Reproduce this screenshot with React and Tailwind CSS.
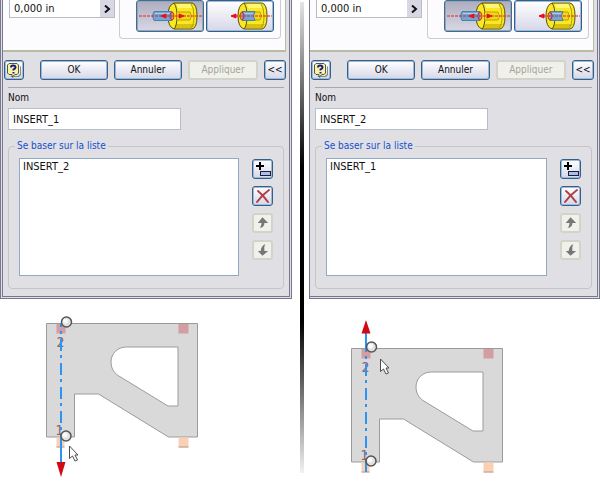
import clsx from "clsx"

const BUTTON = "rounded-[3px] border border-[#2f6090] bg-linear-to-b from-white to-[#d6d7e8] shadow-[inset_0_0_0_1px_#a3b9d0]"
const PRESSED = "rounded-[3px] border border-[#49698f] bg-linear-to-b from-[#adadbe] to-[#d8d8e5] shadow-[inset_0_0_0_1px_#8fa6bf]"
const DISABLED = "rounded-[3px] border-2 border-[#d3d3ca] bg-[#f1f1ec] text-[#a5a595]"

function Barrel() {
  return (
    <>
      <path d="M38 3H56Q61 4 61 16Q61 28 56 29H38Q32 27 32 16Q32 5 38 3Z" fill="#fbe91f" stroke="#57500a" />
      <path d="M41 4H55L57 8H42Z" fill="#fff676" />
      <path d="M40 24H59L56 28H39Z" fill="#dcc010" />
      <path d="M38 3Q41 7 41 16Q41 26 38 29" fill="none" stroke="#57500a" />
      <path d="M55 4Q58 8 58 16Q58 25 55 28" fill="none" stroke="#b39c10" />
      <path d="M41 12H54Q57 16 54 20H41" fill="#f0d818" stroke="#b8a010" />
    </>
  )
}

function OpposedIcon() {
  return (
    <svg viewBox="0 0 68 32" className="h-8 w-full">
      <Barrel />
      <path d="M18 11.500H36V20.500H18Q15 16 18 11.500Z" fill="#6ea6d8" stroke="#4a7fae" />
      <path d="M19 13.500H35" stroke="#a7cdec" />
      <ellipse cx="36" cy="16" rx="2" ry="4" fill="none" stroke="#e3202b" />
      <path d="M3 16H67" stroke="#e8232b" strokeDasharray="3 1" />
      <path d="M25 16L30 14V18ZM48 16L43 14V18Z" fill="#e81019" stroke="#e81019" />
    </svg>
  )
}

function AlignedIcon() {
  return (
    <svg viewBox="0 0 68 32" className="h-8 w-full">
      <Barrel />
      <path d="M36 11.500H49Q46 16 49 20.500H36Z" fill="#6ea6d8" stroke="#4a7fae" />
      <path d="M37 13.500H47" stroke="#a7cdec" />
      <ellipse cx="36" cy="16" rx="2" ry="4" fill="none" stroke="#e3202b" />
      <path d="M25 16H66" stroke="#e8232b" strokeDasharray="3 1" />
      <path d="M25 16L30 14V18Z" fill="#e81019" stroke="#e81019" />
    </svg>
  )
}

function HelpIcon() {
  return (
    <svg viewBox="0 0 16 16" className="size-4">
      <path d="M4 14H12L14 12V4L15 5V13L13 15H8L6 16V15Z" fill="#8c8c7c" />
      <path d="M3 1.500H11L12.500 3V11L11 12.500H9L6 15V12.500H3L1.500 11V3Z" fill="#f8f5a0" stroke="#55554a" />
      <path d="M5 5.500Q5 3.500 7 3.500Q9.500 3.500 9.500 5.500Q9.500 6.500 7.500 7.500V8.500M7.500 10V11.500" fill="none" stroke="#1c1c86" strokeWidth="2" />
    </svg>
  )
}

function AddIcon() {
  return (
    <svg viewBox="0 0 18 18" className="size-[18px]">
      <path d="M2 6H10M6 2V10" stroke="#000" strokeWidth="2" />
      <rect x="6.500" y="11.500" width="10" height="4" fill="#a9bff0" stroke="#1d1d33" />
    </svg>
  )
}

function DeleteIcon() {
  return (
    <svg viewBox="0 0 18 18" className="size-[18px]">
      <path d="M4 4Q9 8 14 15M15 3Q8 8 3 15" fill="none" stroke="#b13e42" strokeWidth="2" strokeLinecap="round" />
    </svg>
  )
}

function UpIcon() {
  return (
    <svg viewBox="0 0 18 18" className="size-[18px]">
      <path d="M9 3L15 9H11Q11 14 6 14Q8 12 8 9H4Z" fill="#777" />
    </svg>
  )
}

function DownIcon() {
  return (
    <svg viewBox="0 0 18 18" className="size-[18px]">
      <path d="M9 15L15 10H11Q10 6 12 3Q8 4 7 10H4Z" fill="#777" />
    </svg>
  )
}

function ConstraintPanel({ id, name, basedOn, edge }) {
  const tools = [
    { label: "Ajouter", icon: <AddIcon /> },
    { label: "Supprimer", icon: <DeleteIcon /> },
    { label: "Monter", icon: <UpIcon />, disabled: true },
    { label: "Descendre", icon: <DownIcon />, disabled: true },
  ]

  return (
    <form className={clsx("border-r-3 border-b-3 border-double border-[#77778f] bg-[#e0dfe4] pr-[3px] pb-[7px]", edge)}>
      {/* Offset and mating options */}
      <div className="flex h-[52px] items-start justify-between border-r border-b-2 border-solid border-[#b9bba9] bg-[#fcfcfe] pr-1 pl-1.5">
        <div className="flex h-[18px] w-[106px] border border-t-0 border-[#b9bcc0] bg-white">
          <input aria-label="Décalage" defaultValue="0,000 in" className="w-0 flex-1 px-1 text-[11px] outline-none" />
          <button type="button" aria-label="Plus" className="flex w-3.5 items-center justify-center bg-[#d8d8e4]">
            <svg viewBox="0 0 8 8" className="size-2">
              <path d="M2 0.500L6 4L2 7.500" fill="none" stroke="#111" strokeWidth="2" />
            </svg>
          </button>
        </div>
        <div className="flex h-[39px] gap-0.5 rounded-b border border-t-0 border-[#cfcbd0] pr-1.5 pl-4">
          <button type="button" aria-label="Opposé" className={clsx("h-8 w-[68px]", PRESSED)}>
            <span className="-m-px block"><OpposedIcon /></span>
          </button>
          <button type="button" aria-label="Aligné" className={clsx("h-8 w-[68px]", BUTTON)}>
            <span className="-m-px block"><AlignedIcon /></span>
          </button>
        </div>
      </div>

      <div className="mt-2 flex h-5 gap-1.5 pl-px">
        <button type="button" aria-label="Aide" className={clsx("mr-2.5 flex w-5 items-center justify-center", BUTTON)}>
          <HelpIcon />
        </button>
        <button type="button" className={clsx("flex-1", BUTTON)}>OK</button>
        <button type="button" className={clsx("flex-1", BUTTON)}>Annuler</button>
        <button type="button" disabled className={clsx("flex-1", DISABLED)}>Appliquer</button>
        <button type="button" className={clsx("w-[22px]", BUTTON)}>&lt;&lt;</button>
      </div>

      <div className="mt-[7px] mr-0.5 ml-[5px] border-t border-solid border-[#a9a8ad] pt-0.5">
        <label htmlFor={id} className="mb-0.5 block h-4">Nom</label>
        <input id={id} defaultValue={name} className="block h-[22px] w-[173px] border border-[#b4bfc9] bg-white px-1 text-[11px] outline-none" />

        <fieldset className="mt-2 flex h-[151px] gap-[13px] rounded border border-[#c6c4ca] px-2.5 pb-3">
          <legend className="-ml-1 px-0.5 text-[#1450d0]">Se baser sur la liste</legend>
          <ul className="mt-1 flex-1 border border-[#8faac6] bg-white px-[3px] text-[11px]">
            <li>{basedOn}</li>
          </ul>
          <div className="flex w-[21px] flex-col gap-[7px] pt-[5px]">
            {tools.map((tool) => (
              <button
                key={tool.label}
                type="button"
                aria-label={tool.label}
                disabled={tool.disabled}
                className={clsx("flex h-5 items-center justify-center", tool.disabled ? DISABLED : BUTTON)}
              >
                {tool.icon}
              </button>
            ))}
          </div>
        </fieldset>
      </div>
    </form>
  )
}

function Handle({ x, y }) {
  return (
    <>
      <circle cx={x} cy={y} r="5" fill="#e2e2e2" stroke="#555" strokeWidth="1.5" />
      <circle cx={x - 1} cy={y - 1} r="2.500" fill="#fafafa" />
    </>
  )
}

// Bracket with its two inserts, origin at the top left corner of the plate
function Bracket({ x, y, direction }) {
  const down = direction === "down"

  return (
    <svg viewBox="0 0 292 200" className="w-full">
      <g transform={`translate(${x} ${y})`}>
        <path
          d="M0 0H151V113.500H122L52 70.500H28V113.500H0ZM80 23.500H131.500V82.500H121.500L71.500 52C67 49 64.500 44 64.500 38.500C64.500 30 71 23.500 80 23.500Z"
          fill="#d9d9da"
          stroke="#9b9b9b"
          fillRule="evenodd"
        />
        <path d="M10 0.500H19V10H10ZM132 0.500H142V10H132Z" fill="#d49da1" />
        <path d="M10 114H18V124H10ZM132 114H142V124H132Z" fill="#fad0b5" />
        <path d="M10 123.500H18M132 123.500H142" stroke="#b89c8d" />
        <text x="10" y="23" fontSize="14" fill="#8d6467">2</text>
        <text x="9" y="111" fontSize="14" fill="#8d6467">1</text>
        <path d="M14.500 0V124" stroke="#2b94f5" strokeWidth="2" strokeDasharray="12 4 3 5" strokeDashoffset="8.5" />
        <path d={down ? "M14.500 112V140" : "M14.500 -16V2"} stroke="#2b94f5" strokeWidth="2" />
        <path d={down ? "M10 138.500H19L14.500 153.500Z" : "M10 -15H19L14.500 -28.500Z"} fill="#cf0a12" />
        <Handle x={20} y={-1.5} />
        <Handle x={19.5} y={112.5} />
        <path
          transform={down ? "translate(22.500 122)" : "translate(28.500 10)"}
          d="M0.500 0.500V13L3.500 10.500L6 15.500L8.500 14.500L6 9.500H9Z"
          fill="#fff"
          stroke="#4c4c4c"
        />
      </g>
    </svg>
  )
}

export default function App() {
  return (
    <main className="grid min-h-screen grid-cols-[minmax(0,1fr)_16px_minmax(0,1fr)] bg-white font-['DejaVu_Sans_Condensed','DejaVu_Sans',sans-serif] text-[10px] leading-4 text-[#111]">
      <section>
        <ConstraintPanel id="name-left" name="INSERT_1" basedOn="INSERT_2" edge="border-l-3" />
        <Bracket x={46.5} y={24.5} direction="down" />
      </section>
      <div className="mt-0.5 mb-[26px] ml-2 w-1 bg-[linear-gradient(#e4e4e4,#000_35%,#000_68%,#f2f2f2)]" />
      <section>
        <ConstraintPanel id="name-right" name="INSERT_2" basedOn="INSERT_1" edge="ml-px border-l" />
        <Bracket x={43.5} y={49.5} direction="up" />
      </section>
    </main>
  )
}
